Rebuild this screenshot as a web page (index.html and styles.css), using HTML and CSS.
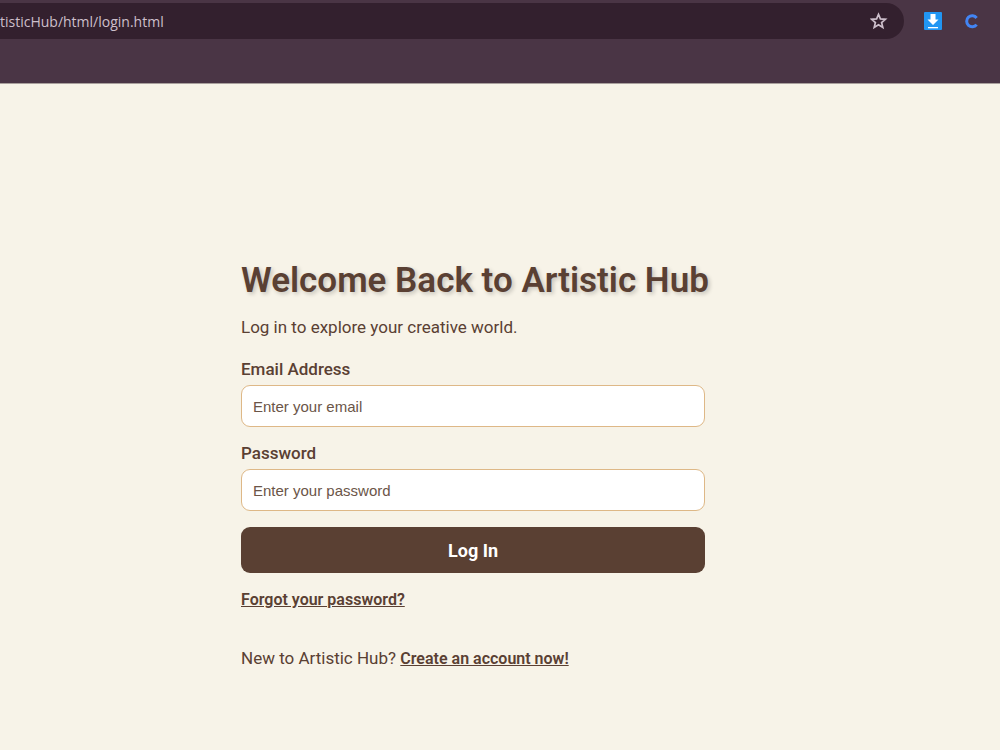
FILE: index.html
```html
<!DOCTYPE html>
<html lang="en">
<head>
    <meta charset="UTF-8">
    <meta name="viewport" content="width=device-width, initial-scale=1.0">
    <title>Artistic Hub - Login</title>
    <link rel="stylesheet" href="styles.css">
</head>
<body>
    <header class="browser-bar">
        <div class="toolbar">
            <div class="address">
                <input type="text" class="url" aria-label="Address" value="tisticHub/html/login.html">
                <button type="button" class="icon-btn" aria-label="Bookmark this page">
                    <svg width="18" height="18" viewBox="0 0 18 18" fill="none" stroke="#cdbfcb" stroke-width="1.7">
                        <path d="M8.500 2.400 L10.400 6.900 L15.400 7.300 L11.600 10.500 L12.800 15.400 L8.500 12.800 L4.200 15.400 L5.400 10.500 L1.600 7.300 L6.600 6.900 Z"/>
                    </svg>
                </button>
            </div>
            <button type="button" class="icon-btn" aria-label="Downloads">
                <svg width="18" height="18" viewBox="0 0 18 18">
                    <rect width="18" height="18" rx="1" fill="#2196f3"/>
                    <path d="M6.500 2h5v5.500h3L9 13 3.500 7.500h3z" fill="#fff"/>
                    <rect x="4" y="15" width="10" height="1.300" fill="#fff"/>
                </svg>
            </button>
            <button type="button" class="icon-btn" aria-label="Extension">
                <svg width="18" height="18" viewBox="0 0 18 18" fill="none" stroke="#4285f4" stroke-width="3">
                    <path d="M14.600 6 A5.500 5.500 0 1 0 14.600 12.600"/>
                </svg>
            </button>
        </div>
    </header>

    <main class="login-page">
        <section class="login-container">
            <h1>Welcome Back to Artistic Hub</h1>
            <p>Log in to explore your creative world.</p>
            <form class="login-form">
                <label for="email">Email Address</label>
                <input type="email" id="email" placeholder="Enter your email">
                <label for="password">Password</label>
                <input type="password" id="password" placeholder="Enter your password">
                <button type="submit">Log In</button>
            </form>
            <a href="#" class="forgot">Forgot your password?</a>
            <p class="signup">New to Artistic Hub? <a href="#">Create an account now!</a></p>
        </section>
    </main>
</body>
</html>
```
FILE: styles.css
```css
* {
    box-sizing: border-box;
}
body {
    margin: 0;
    min-height: 100vh;
    display: flex;
    flex-direction: column;
    background-color: #f7f3e8;
    color: #5a4033;
    font-family: Roboto, sans-serif;
    font-size: 17px;
    line-height: 24px;
}

/* Browser bar */
.browser-bar {
    padding: 3px 20px 44px 0;
    background-color: #4a3545;
    border-bottom: 1px solid #a9a09d;
}
.toolbar {
    display: flex;
    align-items: center;
    gap: 20px;
}
.address {
    flex: 1;
    display: flex;
    align-items: center;
    height: 36px;
    padding-right: 16px;
    border-radius: 0 18px 18px 0;
    background-color: #33202e;
}
.url {
    flex: 1;
    min-width: 0;
    padding: 0;
    border: none;
    background: none;
    color: #cdbfcb;
    font-family: "Open Sans", sans-serif;
    font-size: 14px;
}
.icon-btn {
    display: flex;
    padding: 0;
    border: none;
    background: none;
    cursor: pointer;
}

/* Login page */
.login-page {
    flex: 1;
    display: flex;
    justify-content: center;
    align-items: center;
    padding: 98px 54px 0 0;
}
.login-container {
    width: 100%;
    max-width: 464px;
}
h1 {
    margin: 0 0 14px;
    font-size: 35px;
    line-height: 40px;
    font-weight: 600;
    white-space: nowrap;
    text-shadow: 2px 2px 4px rgba(0, 0, 0, 0.2);
}
p {
    margin: 0 0 18px;
}
.login-form {
    display: flex;
    flex-direction: column;
}
.login-form label {
    margin-bottom: 4px;
    font-size: 17px;
    font-weight: 500;
}
.login-form input {
    height: 42px;
    margin-bottom: 14px;
    padding: 0 11px;
    border: 1px solid #deb887;
    border-radius: 9px;
    background-color: #fff;
    color: #5a4033;
    font-family: "Liberation Sans", Arial, sans-serif;
    font-size: 15px;
}
.login-form input::placeholder {
    color: #6b5548;
}
.login-form button {
    height: 46px;
    margin-top: 2px;
    border: none;
    border-radius: 9px;
    background-color: #5a4033;
    color: #fff;
    font-family: inherit;
    font-size: 18px;
    font-weight: 700;
    cursor: pointer;
}
a {
    color: inherit;
    font-size: 16px;
    font-weight: 600;
}
.forgot {
    display: inline-block;
    margin-top: 15px;
}
.signup {
    margin: 34px 0 0;
}
```
